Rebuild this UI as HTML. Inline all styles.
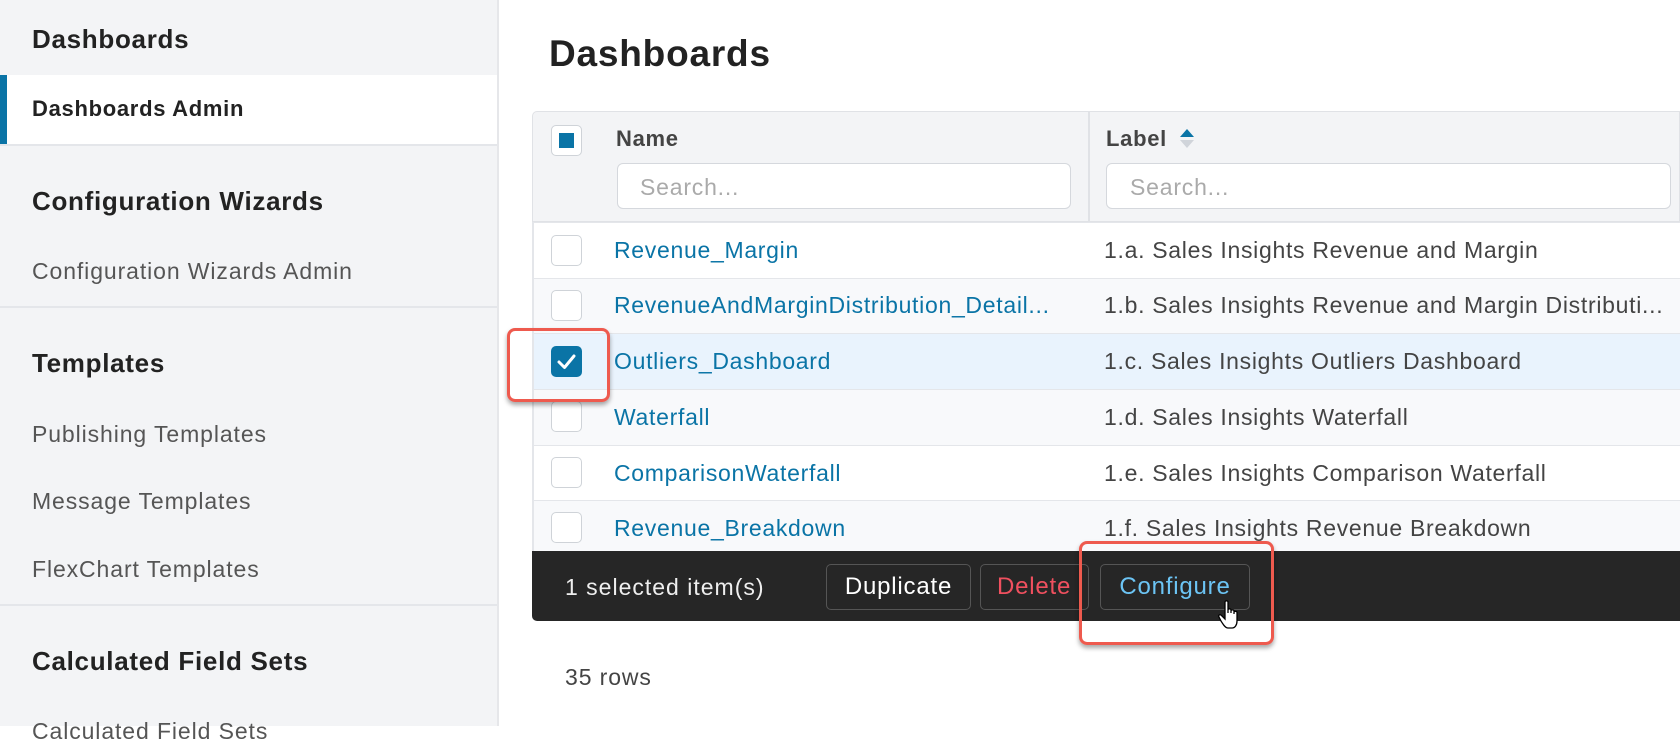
<!DOCTYPE html>
<html><head><style>
*{margin:0;padding:0;box-sizing:border-box}
body{width:1680px;height:726px;overflow:hidden;background:#fff;font-family:"Liberation Sans",sans-serif;position:relative;color:#222}
.sb{position:absolute;left:0;top:0;width:499px;height:726px;background:#f3f4f6;border-right:2px solid #e6e7ea}
.abs{position:absolute;white-space:nowrap}
.h{font-size:26px;letter-spacing:0.7px;font-weight:bold;color:#222;left:32px}
.it{font-size:23px;letter-spacing:0.9px;color:#555;left:32px}
.div{position:absolute;left:0;width:497px;height:2px;background:#e4e6ea}
.cb{position:absolute;width:31px;height:31px;border:1.5px solid #cfd3d8;border-radius:5px;background:#fff}
.lnk{color:#0a74a6;font-size:23px;letter-spacing:0.7px}
.lbl{color:#444;font-size:23px;letter-spacing:0.7px}
.row{position:absolute;left:532px;width:1148px;border-top:1.5px solid #e4e6ea}
.btn{position:absolute;top:564px;height:46px;border:1.5px solid #555;border-radius:5px;font-size:24px;letter-spacing:0.8px;line-height:43px;text-align:center}
.red{position:absolute;border:3px solid #ee5a4e;border-radius:8px;box-shadow:0 3px 5px rgba(0,0,0,.35)}
</style></head><body>
<div class="sb">
<div class="abs h" style="top:24px">Dashboards</div>
<div style="position:absolute;left:0;top:75px;width:497px;height:69px;background:#fff"></div>
<div style="position:absolute;left:0;top:75px;width:7px;height:69px;background:#0a74a6"></div>
<div class="abs" style="left:32px;top:96px;font-size:22px;letter-spacing:0.7px;font-weight:bold;color:#222">Dashboards Admin</div>
<div class="div" style="top:144px"></div>
<div class="abs h" style="top:186px">Configuration Wizards</div>
<div class="abs it" style="top:258px">Configuration Wizards Admin</div>
<div class="div" style="top:306px"></div>
<div class="abs h" style="top:348px">Templates</div>
<div class="abs it" style="top:421px">Publishing Templates</div>
<div class="abs it" style="top:488px">Message Templates</div>
<div class="abs it" style="top:556px">FlexChart Templates</div>
<div class="div" style="top:604px"></div>
<div class="abs h" style="top:646px">Calculated Field Sets</div>
<div class="abs it" style="top:718px">Calculated Field Sets</div>
</div>

<div class="abs" style="left:549px;top:33px;font-size:37px;letter-spacing:0.8px;font-weight:bold;color:#222">Dashboards</div>

<div style="position:absolute;left:532px;top:111px;width:1148px;height:111px;background:#f3f4f6;border:1.5px solid #e0e2e6;border-radius:5px 0 0 0"></div>
<div style="position:absolute;left:1088px;top:112px;width:1.5px;height:110px;background:#e0e2e6"></div>
<div class="cb" style="left:551px;top:125px"></div>
<div style="position:absolute;left:559px;top:133px;width:15px;height:15px;background:#0a74a6"></div>
<div class="abs" style="left:616px;top:126px;font-size:22px;letter-spacing:0.7px;font-weight:bold;color:#444">Name</div>
<div class="abs" style="left:1106px;top:126px;font-size:22px;letter-spacing:0.7px;font-weight:bold;color:#444">Label</div>
<div style="position:absolute;left:1180px;top:129px;width:0;height:0;border-left:7px solid transparent;border-right:7px solid transparent;border-bottom:8px solid #0a74a6"></div>
<div style="position:absolute;left:1180px;top:140px;width:0;height:0;border-left:7px solid transparent;border-right:7px solid transparent;border-top:8px solid #d0d4da"></div>
<div style="position:absolute;left:617px;top:163px;width:454px;height:46px;background:#fff;border:1.5px solid #d5d8dd;border-radius:6px"></div>
<div class="abs" style="left:640px;top:174px;font-size:23px;letter-spacing:0.8px;color:#aaa">Search...</div>
<div style="position:absolute;left:1106px;top:163px;width:565px;height:46px;background:#fff;border:1.5px solid #d5d8dd;border-radius:6px"></div>
<div class="abs" style="left:1130px;top:174px;font-size:23px;letter-spacing:0.8px;color:#aaa">Search...</div>

<div class="row" style="top:222px;height:56px;background:#fff"></div>
<div class="row" style="top:278px;height:55px;background:#f8f9fb"></div>
<div class="row" style="top:333px;height:56px;background:#e9f3fd"></div>
<div class="row" style="top:389px;height:56px;background:#f8f9fb"></div>
<div class="row" style="top:445px;height:55px;background:#fff"></div>
<div class="row" style="top:500px;height:51px;background:#f8f9fb"></div>
<div style="position:absolute;left:532px;top:222px;width:1.5px;height:330px;background:#e4e6ea"></div>

<div class="cb" style="left:551px;top:235px"></div>
<div class="cb" style="left:551px;top:290px"></div>
<div class="cb" style="left:551px;top:346px;background:#0a74a6;border-color:#0a74a6"></div>
<svg style="position:absolute;left:551px;top:346px" width="31" height="31"><path d="M8 16 L13.5 21.5 L23 10" stroke="#fff" stroke-width="3" fill="none" stroke-linecap="round" stroke-linejoin="round"/></svg>
<div class="cb" style="left:551px;top:401px"></div>
<div class="cb" style="left:551px;top:457px"></div>
<div class="cb" style="left:551px;top:512px"></div>

<div class="abs lnk" style="left:614px;top:237px">Revenue_Margin</div>
<div class="abs lnk" style="left:614px;top:292px">RevenueAndMarginDistribution_Detail...</div>
<div class="abs lnk" style="left:614px;top:348px">Outliers_Dashboard</div>
<div class="abs lnk" style="left:614px;top:404px">Waterfall</div>
<div class="abs lnk" style="left:614px;top:460px">ComparisonWaterfall</div>
<div class="abs lnk" style="left:614px;top:515px">Revenue_Breakdown</div>
<div class="abs lbl" style="left:1104px;top:237px">1.a. Sales Insights Revenue and Margin</div>
<div class="abs lbl" style="left:1104px;top:292px;width:566px;overflow:hidden">1.b. Sales Insights Revenue and Margin Distributi...</div>
<div class="abs lbl" style="left:1104px;top:348px">1.c. Sales Insights Outliers Dashboard</div>
<div class="abs lbl" style="left:1104px;top:404px">1.d. Sales Insights Waterfall</div>
<div class="abs lbl" style="left:1104px;top:460px">1.e. Sales Insights Comparison Waterfall</div>
<div class="abs lbl" style="left:1104px;top:515px">1.f. Sales Insights Revenue Breakdown</div>

<div style="position:absolute;left:532px;top:551px;width:1148px;height:70px;background:#262626;border-radius:0 0 0 5px"></div>
<div class="abs" style="left:565px;top:574px;font-size:23px;letter-spacing:1px;color:#eee">1 selected item(s)</div>
<div class="btn" style="left:826px;width:145px;color:#fff">Duplicate</div>
<div class="btn" style="left:980px;width:109px;color:#f0505f;text-align:left;padding-left:16px;overflow:hidden">Delete</div>
<div class="btn" style="left:1100px;width:150px;color:#6cc4f4">Configure</div>
<svg style="position:absolute;left:1218px;top:600px" width="26" height="32" viewBox="0 0 26 32"><path d="M7 2 C7 0.5 10 0.5 10 2 L10 13 L10 10 C10 8.5 13 8.5 13 10 L13 13 L13 11 C13 9.5 16 9.5 16 11 L16 14 L16 12.5 C16 11 19 11 19 12.5 L19 21 C19 25 17 28 14 28 L10 28 C7 28 5 24 3 21 L1 17 C0 15 2 14 3.5 15.5 L7 19 Z" fill="#fff" stroke="#000" stroke-width="1.3"/></svg>

<div class="red" style="left:507px;top:328px;width:103px;height:74px"></div>
<div class="red" style="left:1079px;top:541px;width:195px;height:104px"></div>

<div class="abs" style="left:565px;top:664px;font-size:23px;letter-spacing:0.9px;color:#444">35 rows</div>
</body></html>
